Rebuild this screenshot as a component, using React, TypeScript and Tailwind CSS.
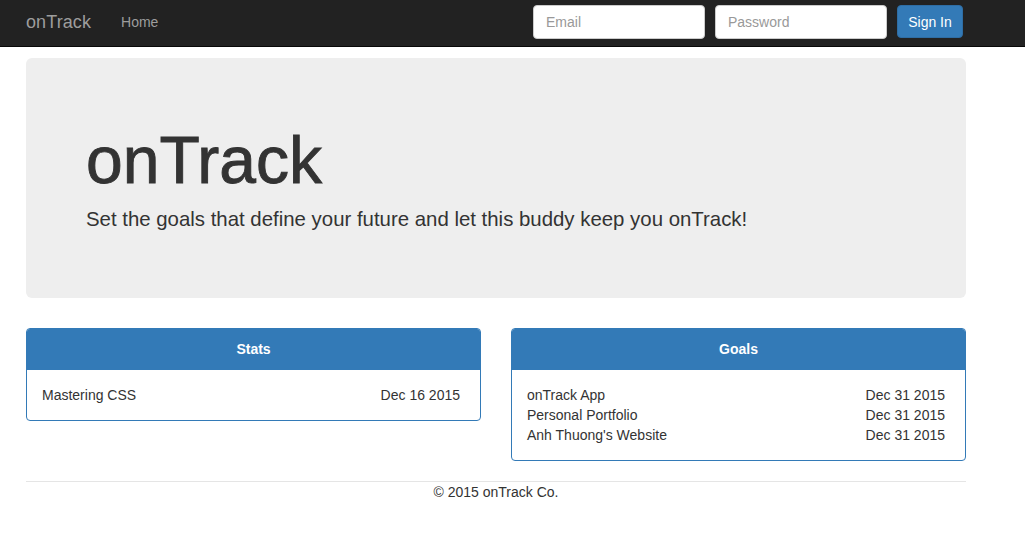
const goals = [
  { name: 'onTrack App', due: 'Dec 31 2015' },
  { name: 'Personal Portfolio', due: 'Dec 31 2015' },
  { name: "Anh Thuong's Website", due: 'Dec 31 2015' },
];

const stats = [{ name: 'Mastering CSS', due: 'Dec 16 2015' }];

function Panel({ title, rows }: { title: string; rows: { name: string; due: string }[] }) {
  return (
    <div className="rounded-[4px] border border-[#337ab7] bg-white mb-5">
      <div className="bg-[#337ab7] border-b border-[#337ab7] rounded-t-[3px] px-[15px] py-[10px] text-center text-white font-bold text-[14px] leading-5">
        {title}
      </div>
      <div className="pl-[15px] pr-5 py-[15px]">
        {rows.map((r) => (
          <div key={r.name} className="flex justify-between text-[14px] leading-5">
            <span>{r.name}</span>
            <span>{r.due}</span>
          </div>
        ))}
      </div>
    </div>
  );
}

export default function App() {
  return (
    <div className="min-h-screen bg-white text-[#333] font-['Liberation_Sans',Arial,sans-serif] text-[14px] leading-5">
      <nav className="bg-[#222] border-b border-[#080808] h-[47px]">
        <div className="ml-[26px] w-[940px] h-[46px] flex items-start">
          <span className="mt-3 text-[18px] leading-5 text-[#9d9d9d] tracking-[0.1px]">onTrack</span>
          <span className="mt-[12px] ml-[30px] text-[#9d9d9d]">Home</span>
          <div className="ml-auto mr-[3px] pt-[5px] flex items-start">
            <input
              placeholder="Email"
              className="w-[172px] h-[34px] rounded-[4px] border border-[#ccc] bg-white px-3 text-[14px] text-[#555] placeholder:text-[#999] outline-none"
            />
            <input
              placeholder="Password"
              type="password"
              className="ml-[10px] w-[172px] h-[34px] rounded-[4px] border border-[#ccc] bg-white px-3 text-[14px] text-[#555] placeholder:text-[#999] outline-none"
            />
            <button className="ml-[10px] w-[66px] h-[33px] rounded-[4px] bg-[#337ab7] border border-[#2e6da4] text-white text-[14px]">
              Sign In
            </button>
          </div>
        </div>
      </nav>

      <main className="ml-[26px] w-[940px] pt-[11px]">
        <section className="bg-[#eee] rounded-[6px] px-[60px] py-[48px] mb-[30px]">
          <h1 className="text-[66px] leading-[69.3px] mt-5 mb-[10px] text-[#333] [-webkit-text-stroke:0.9px_#333]">
            onTrack
          </h1>
          <p className="text-[20.4px] leading-[29.4px] mb-[15px]">
            Set the goals that define your future and let this buddy keep you onTrack!
          </p>
        </section>

        <div className="grid grid-cols-2 gap-x-[30px] items-start">
          <Panel title="Stats" rows={stats} />
          <Panel title="Goals" rows={goals} />
        </div>

        <footer className="border-t border-[#e5e5e5] text-center leading-5">
          © 2015 onTrack Co.
        </footer>
      </main>
    </div>
  );
}
